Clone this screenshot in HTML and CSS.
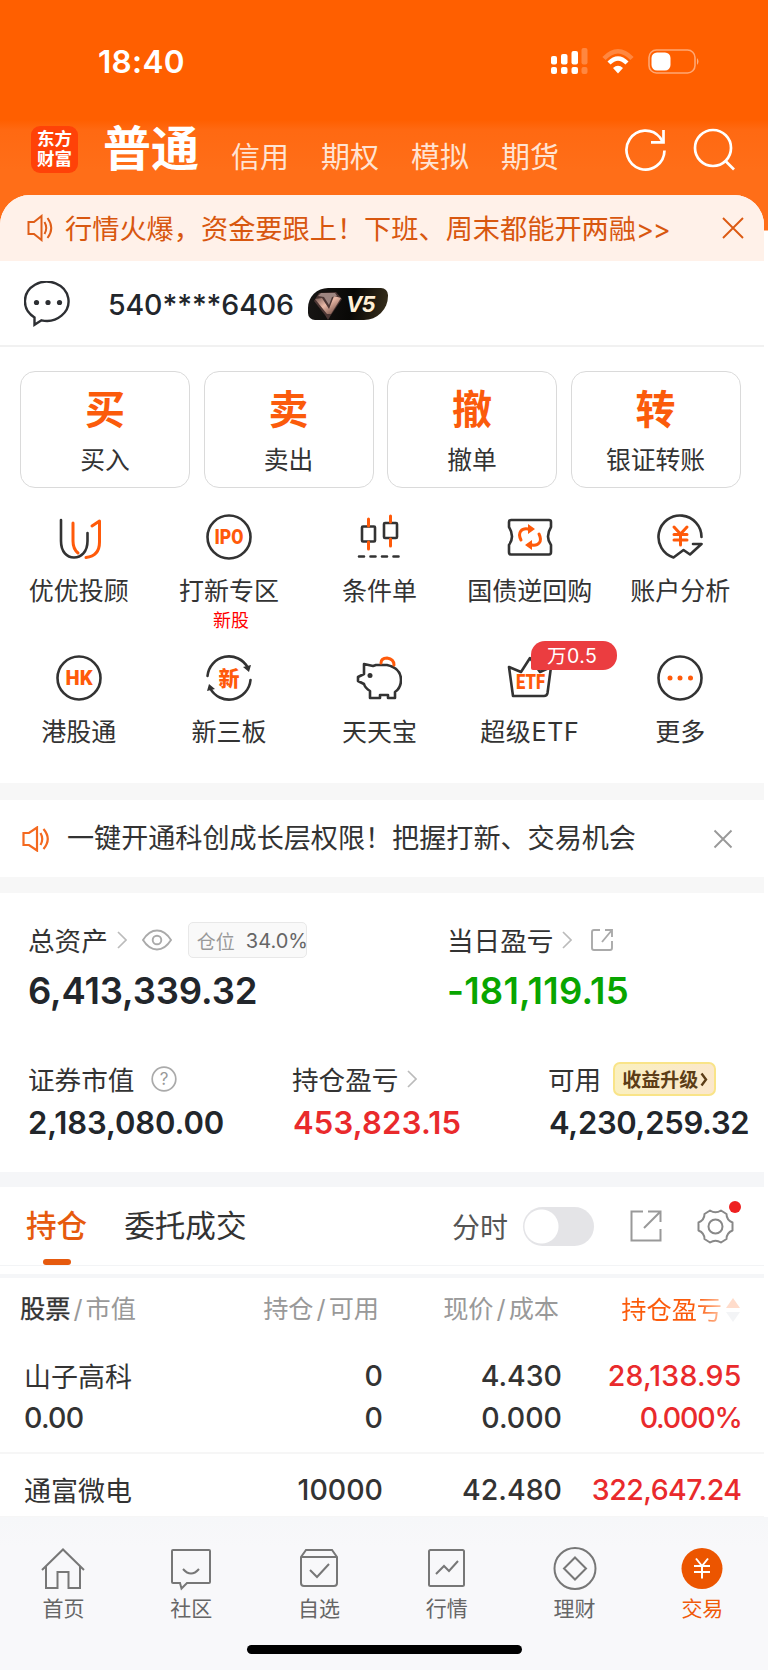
FILE: index.html
```
<!DOCTYPE html>
<html lang="zh-CN">
<head>
<meta charset="utf-8">
<title>交易</title>
<link rel="stylesheet" href="styles.css">
</head>
<body>
<div class="app">
<header class="hero">
  <div class="status">
    <span class="clock">18:40</span>
    <svg class="signal" width="37" height="27" viewBox="0 0 37 27" fill="#fff"><rect x="0" y="8" width="6" height="8.500" rx="2"/><rect x="10" y="6" width="6.500" height="10.500" rx="2"/><rect x="20.500" y="3" width="6.500" height="13.500" rx="2"/><rect x="30.500" y="0" width="6" height="16.500" rx="2" opacity=".25"/><rect x="0" y="19" width="6" height="7" rx="2"/><rect x="10" y="19" width="6.500" height="7" rx="2"/><rect x="20.500" y="19" width="6.500" height="7" rx="2"/><rect x="30.500" y="19" width="6" height="7" rx="2" opacity=".25"/></svg>
    <svg class="wifi" width="32" height="25" viewBox="0 0 32 25" fill="none"><path d="M2 9.500Q16-5 30 9.500" stroke="#fff" stroke-opacity=".25" stroke-width="4.500"/><path d="M7 14Q16 5 25 14" stroke="#fff" stroke-width="4.300"/><path d="M11 19Q16 14.500 21 19L16 24.500Z" fill="#fff"/></svg>
    <svg class="battery" width="52" height="25" viewBox="0 0 52 25"><rect x="1" y="1" width="46" height="23" rx="7.500" fill="none" stroke="#fff" stroke-opacity=".45" stroke-width="1.600"/><rect x="3.500" y="3.500" width="19" height="18" rx="5.500" fill="#fff"/><path d="M49 9Q52 12.500 49 16Z" fill="#fff" opacity=".5"/></svg>
  </div>
  <nav class="modes">
    <div class="logo"><span>东方</span><span>财富</span></div>
    <b class="mode-on">普通</b>
    <span class="mode">信用</span><span class="mode">期权</span><span class="mode">模拟</span><span class="mode">期货</span>
    <svg class="refresh" width="43" height="44" viewBox="0 0 43 44" fill="none" stroke="#fff" stroke-width="2.700"><path d="M40.500 22.500A19 19.500 0 1 1 36 9.500L39 14.300"/><path d="M39.500 2V14.300H27"/></svg>
    <svg class="search" width="43" height="44" viewBox="0 0 43 44" fill="none" stroke="#fff" stroke-width="2.700"><circle cx="20" cy="20" r="18"/><path d="M32.500 33L41 41.500"/></svg>
  </nav>
</header>

<main class="sheet">
  <div class="promo">
    <svg width="27" height="28" viewBox="0 0 27 28" fill="none" stroke="#df5e18" stroke-width="2"><path d="M1.500 8H7L14.500 2V26L7 20H1.500Z"/><path d="M17.500 8Q21 14 17.500 20M20.500 4Q28 14 20.500 24"/></svg>
    <span class="promo-text">行情火爆，资金要跟上！下班、周末都能开两融<span class="more">&gt;&gt;</span></span>
    <svg class="promo-x" width="24" height="24" viewBox="0 0 24 24" stroke="#dc5a12" stroke-width="1.900"><path d="M2 2L22 22M22 2L2 22"/></svg>
  </div>

  <div class="account">
    <svg width="48" height="46" viewBox="0 0 48 46" fill="none" stroke="#2d2f33" stroke-width="2.400"><path d="M10.500 36.500A21.800 19.600 0 1 1 17.500 39.300L10.500 43.800Z"/><g fill="#2d2f33" stroke="none"><circle cx="12.500" cy="21.500" r="2.600"/><circle cx="24" cy="21.500" r="2.600"/><circle cx="35.500" cy="21.500" r="2.600"/></g></svg>
    <span class="acct-no">540****6406</span>
    <div class="vip">
      <svg width="34" height="32" viewBox="0 0 34 32"><defs><linearGradient id="gem" x1="0" y1="0" x2="1" y2="1"><stop offset="0" stop-color="#6b504c"/><stop offset=".45" stop-color="#eab9a7"/><stop offset="1" stop-color="#56342c"/></linearGradient></defs><path d="M11 5L28 4L34 11L23 27L20 32L17 27L6 13Z" fill="#4c3634"/><path d="M7 11L14 10L21 21L26 8L33 10L23 26H19Z" fill="url(#gem)"/><path d="M13 5H27L29 8L24 9L21 17L16 9L10 8Z" fill="#9d8580"/></svg>
      <span>V5</span>
    </div>
  </div>

  <section class="actions">
    <div class="action"><b>买</b><span>买入</span></div>
    <div class="action"><b>卖</b><span>卖出</span></div>
    <div class="action"><b>撤</b><span>撤单</span></div>
    <div class="action"><b>转</b><span>银证转账</span></div>
  </section>

  <section class="tools">
    <div class="tool"><svg class="ico" viewBox="0 0 46 46"><path d="M5 6V27C5 38 11 43.500 18 43.500S31.500 38 31.500 27V19"/><path class="o" d="M17 9V27Q17 35 22 39M30 43.500Q43.500 42 43.500 28V7L36 12"/></svg><span>优优投顾</span></div>
    <div class="tool"><svg class="ico" viewBox="0 0 46 46"><circle cx="23" cy="23" r="21.500"/><text x="23" y="30" textLength="29" lengthAdjust="spacingAndGlyphs" font-size="20">IPO</text></svg><span>打新专区</span><em>新股</em></div>
    <div class="tool"><svg class="ico" viewBox="0 0 46 46"><rect x="6" y="12.500" width="13" height="15" rx="1"/><rect x="28" y="9" width="13" height="15" rx="1"/><path class="o" d="M12.500 5V12M12.500 28V35M34.500 2V8M34.500 25V32"/><path d="M3 42.500H44" stroke-dasharray="5 6.500"/></svg><span>条件单</span></div>
    <div class="tool"><svg class="ico" viewBox="0 0 46 46"><path d="M4 6H42Q44 6 44 8V13Q38 23 44 31V38Q44 40.500 42 40.500H4Q2 40.500 2 38V31Q8 23 2 13V8Q2 6 4 6Z"/><path class="o" d="M14 26C10 18 15 14 21 15M32 20C36 28 31 32 25 31"/><path d="M21 10L28 15L21 20ZM25 26L18 31L25 36Z" fill="#ff5a0a" stroke="none"/></svg><span>国债逆回购</span></div>
    <div class="tool"><svg class="ico" viewBox="0 0 46 46"><path d="M44.500 23A21.500 21.500 0 1 0 16.500 43.500L26.500 36L33 40.500L44.500 30H36"/><path class="o" d="M17 13L23.500 20L30 13M23.500 20V31M17 20.500H30M17 26H30"/></svg><span>账户分析</span></div>

    <div class="tool"><svg class="ico" viewBox="0 0 46 46"><circle cx="23" cy="23" r="21.500"/><text x="23" y="30" textLength="27" lengthAdjust="spacingAndGlyphs" font-size="20">HK</text></svg><span>港股通</span></div>
    <div class="tool"><svg class="ico" viewBox="0 0 46 46"><path d="M1.500 21A21.500 21.500 0 0 1 42 13M44.500 25A21.500 21.500 0 0 1 4 33"/><path d="M37 12L45 10L43 17ZM9 34L1 36L3 29Z" fill="#333" stroke="none"/><text x="23" y="31" font-size="21">新</text></svg><span>新三板</span></div>
    <div class="tool"><svg class="ico" viewBox="0 0 46 46"><path d="M8 9L17 11L20 10H31Q45 13 45 25Q45 33 39 37V43H32V40H24V43H14V36Q9 33 8 29L2 26V22L8 19V15Z"/><circle cx="14" cy="20.500" r="2.500" fill="#333" stroke="none"/><path class="o" d="M25 8Q25 3 31 3Q38 4 38 10"/></svg><span>天天宝</span></div>
    <div class="tool"><svg class="ico" viewBox="0 0 46 46"><path d="M6 41L2 12L14 17L23 3L33 17L44 12L40.500 38Q40 41 37 41Z"/><text x="23.500" y="34" textLength="29" lengthAdjust="spacingAndGlyphs" font-size="21">ETF</text></svg><span class="etf">超级ETF</span><i class="rate">万0.5</i></div>
    <div class="tool"><svg class="ico" viewBox="0 0 46 46"><circle cx="23" cy="23" r="21.500"/><g fill="#ff5a0a" stroke="none"><circle cx="13" cy="23" r="2.500"/><circle cx="23" cy="23" r="2.500"/><circle cx="33.500" cy="23" r="2.500"/></g></svg><span>更多</span></div>
  </section>

  <div class="notice">
    <svg width="28" height="26" viewBox="0 0 28 26" fill="none" stroke="#f4691f" stroke-width="2.200"><path d="M1.500 7H7L15 1.500V24.500L7 19H1.500Z"/><path d="M18.500 7Q22 13 18.500 19M21.500 3Q30 13 21.500 23"/></svg>
    <span>一键开通科创成长层权限！把握打新、交易机会</span>
    <svg class="notice-x" width="20" height="20" viewBox="0 0 20 20" stroke="#999" stroke-width="1.900"><path d="M1.500 1.500L18.500 18.500M18.500 1.500L1.500 18.500"/></svg>
  </div>

  <section class="totals">
    <div class="total">
      <div class="cap"><span>总资产</span><svg class="chev" viewBox="0 0 10 18"><path d="M1 1L9 9L1 17"/></svg>
        <svg class="eye" width="30" height="22" viewBox="0 0 30 22"><path d="M1 11Q7 1.500 15 1.500T29 11Q23 20.500 15 20.500T1 11Z"/><circle cx="15" cy="11" r="4.300"/></svg>
        <div class="ratio"><span>仓位</span><span class="pct">34.0%</span></div></div>
      <div class="sum">6,413,339.32</div>
    </div>
    <div class="total">
      <div class="cap"><span>当日盈亏</span><svg class="chev" viewBox="0 0 10 18"><path d="M1 1L9 9L1 17"/></svg>
        <svg class="share" width="24" height="24" viewBox="0 0 24 24"><path d="M10 2H4Q2 2 2 4V20Q2 22 4 22H20Q22 22 22 20V13M15 2H22V9M22 2L12 14"/></svg></div>
      <div class="sum down">-181,119.15</div>
    </div>
  </section>

  <section class="details">
    <div class="detail"><div class="cap"><span>证券市值</span><svg class="help" width="26" height="26" viewBox="0 0 26 26"><circle cx="13" cy="13" r="11.800" fill="none" stroke="#aaa" stroke-width="1.700"/><text x="13" y="19" text-anchor="middle" font-size="17" fill="#999">?</text></svg></div><div class="val v1">2,183,080.00</div></div>
    <div class="detail"><div class="cap"><span>持仓盈亏</span><svg class="chev" viewBox="0 0 10 18"><path d="M1 1L9 9L1 17"/></svg></div><div class="val up v2">453,823.15</div></div>
    <div class="detail"><div class="cap"><span>可用</span><div class="boost"><span>收益升级</span><svg width="8" height="15" viewBox="0 0 8 15"><path d="M1.500 1.500L6 7.500L1.500 13.500" fill="none" stroke="#5c3d17" stroke-width="2.400"/></svg></div></div><div class="val v3">4,230,259.32</div></div>
  </section>

  <section class="tabs">
    <div class="tab tab-on">持仓</div><div class="tab">委托成交</div>
    <span class="minute">分时</span><span class="switch"></span>
    <svg class="export" width="32" height="32" viewBox="0 0 32 32" fill="none" stroke="#999" stroke-width="2"><path d="M13 1.500H1.500V30.500H30.500V19M18 1.500H30.500V12M30 2L14 18"/></svg>
    <div class="gear"><svg width="37" height="37" viewBox="0 0 37 37" fill="none" stroke="#888" stroke-width="2"><path d="M13 2.500Q18.500 6 24 2.500L29.500 6Q29.500 12 35.500 14.500V22.500Q29.500 25 29.500 31L24 34.500Q18.500 31 13 34.500L7.500 31Q7.500 25 1.500 22.500V14.500Q7.500 12 7.500 6Z" stroke-linejoin="round"/><circle cx="18.500" cy="18.500" r="7"/></svg><i class="dot"></i></div>
  </section>
  <div class="rule"></div>

  <section class="book">
    <div class="row head"><span><strong>股票</strong><s>/</s>市值</span><span>持仓<s>/</s>可用</span><span>现价<s>/</s>成本</span><span class="sort"><span class="fade">持仓盈亏</span><svg width="16" height="32" viewBox="0 0 16 32"><path d="M8 4L15 14H1Z" fill="#ffdccb"/><path d="M8 28L15 18H1Z" fill="#f3f4f6"/></svg></span></div>
    <div class="stock">
      <div class="row"><span class="name">山子高科</span><span>0</span><span>4.430</span><span class="up wide">28,138.95</span></div>
      <div class="row"><span class="amount">0.00</span><span>0</span><span>0.000</span><span class="up pctval">0.000%</span></div>
    </div>
    <div class="stock last">
      <div class="row"><span class="name">通富微电</span><span>10000</span><span>42.480</span><span class="up tight">322,647.24</span></div>
    </div>
  </section>
</main>

<footer class="bar">
  <div class="links">
    <div class="link"><svg viewBox="0 0 44 44"><path d="M1 23L22 2.500L43 23M5 19.500V41H16.500V25H27.500V41H39V19.500"/></svg><span>首页</span></div>
    <div class="link"><svg viewBox="0 0 44 44"><path d="M4 3H40Q41 3 41 4V35Q41 36 40 36H18L12.500 41.500L11 36H4Q3 36 3 35V4Q3 3 4 3ZM14 22Q22 31 30 22"/></svg><span>社区</span></div>
    <div class="link"><svg viewBox="0 0 44 44"><path d="M4 10V36Q4 39 7 39H37Q40 39 40 36V10L35 3H9ZM4 10H40M13 23L20 30L32 17"/></svg><span>自选</span></div>
    <div class="link"><svg viewBox="0 0 44 44"><rect x="4" y="3" width="35" height="36" rx="1.500"/><path d="M11 27L19 19L24 24L33 14"/></svg><span>行情</span></div>
    <div class="link"><svg viewBox="0 0 44 44"><circle cx="22" cy="21.500" r="20.500"/><path d="M22 10.500L33 21.500L22 32.500L11 21.500Z"/></svg><span>理财</span></div>
    <div class="link on"><svg viewBox="0 0 44 44"><circle cx="22" cy="21.500" r="20.500" fill="#ec5500" stroke="none"/><path d="M16 11.500L22 19L28 11.500M22 19V31.500M14 19H30M14 25H30" stroke="#fff"/></svg><span>交易</span></div>
  </div>
  <div class="home"></div>
</footer>
</div>
</body>
</html>
```
FILE: styles.css
```
* { box-sizing: border-box; }
body { margin: 0; background: #fff; color: #333; font-family: Inter, "Noto Sans CJK SC", sans-serif; }
.app { width: 768px; height: 1670px; overflow: hidden; white-space: nowrap; background: linear-gradient(#ff5f00 0, #ff5f00 120px, #ff6912 130px, #ff6e18 170px, #ff6e18 230px, #fff 231px); }
svg { display: block; flex: none; }
.hero { height: 195px; }

.status { display: flex; align-items: center; height: 122px; padding: 0 68px 0 98px; }
.clock { flex: 1; font-size: 31.500px; font-weight: 600; color: #fff; letter-spacing: .3px; line-height: 40px; padding-top: 1px; }
.wifi { margin: 0 14px 0 14px; }

.modes { display: flex; height: 73px; padding: 0 32px 0 31px; align-items: flex-start; color: #fff; }
.logo { width: 47px; height: 47px; margin-top: 4px; padding-top: 4px; border-radius: 9px; background: #ff4208; display: flex; flex-direction: column; align-items: center; font-family: "Liberation Serif", "Noto Sans CJK SC", serif; font-size: 17.500px; font-weight: 700; line-height: 19.500px; }
.mode-on { font-size: 48px; line-height: 54px; margin: 0 32px 0 25px; }
.mode { font-size: 29px; line-height: 40px; margin: 16px 32px 0 0; color: #ffe3d2; }
.refresh { margin: 6px 26px 0 auto; }
.search { margin-top: 6px; }

.sheet { width: 764px; height: 1322px; background: #fff; border-radius: 30px 30px 0 0; overflow: hidden; }
.promo { display: flex; align-items: center; height: 66px; padding: 0 19px 0 27px; background: #fff1e9; color: #d8570f; font-size: 27.200px; }
.promo-text { margin-left: 11px; line-height: 40px; padding-top: 3px; }
.more { letter-spacing: -1.200px; }
.promo-x { margin-left: auto; }

.account { display: flex; align-items: center; height: 86px; padding: 2px 0 0 24px; border-bottom: 2px solid #f1f1f1; color: #22262b; }
.acct-no { margin: 1px 0 0 36px; font-size: 28.500px; font-weight: 500; width: 185px; letter-spacing: -.1px; }
.vip { display: flex; align-items: center; margin-left: 15px; width: 80px; height: 32px; border-radius: 20px 7px 24px 7px; background: linear-gradient(100deg, #181615, #090806 55%, #39301c); overflow: hidden; }
.vip span { margin-left: 4px; color: #fff0d6; font-size: 22px; font-weight: 700; font-style: italic; letter-spacing: -.8px; }

.actions { display: grid; grid-template-columns: repeat(4, 170px); gap: 13.500px; padding: 24px 0 0 20px; }
.action { height: 117px; border: 1.500px solid #dadada; border-radius: 15px; display: flex; flex-direction: column; align-items: center; }
.action b { font-size: 40px; line-height: 50px; margin-top: 13px; color: #fb5b0b; }
.action span { font-size: 24.800px; line-height: 34px; margin-top: 8px; }

.tools { display: grid; grid-template-columns: repeat(5, 150.400px); grid-template-rows: 141px 128px; padding: 26px 0 0 3.500px; height: 295px; }
.tool { display: flex; flex-direction: column; align-items: center; position: relative; font-size: 25px; }
.tool span { line-height: 34px; margin-top: 14px; }
.tool .etf { letter-spacing: .7px; }
.tool em { font-style: normal; font-size: 18px; line-height: 22px; color: #f00; margin: 2px 0 0 4px; }
.ico { width: 46px; height: 46px; fill: none; stroke: #333; stroke-width: 2.600; stroke-linecap: round; stroke-linejoin: round; }
.ico .o { stroke: #ff5a0a; stroke-width: 3; }
.ico text { fill: #ff5a0a; stroke: none; font-family: Roboto, "Noto Sans CJK SC", sans-serif; font-weight: 900; text-anchor: middle; }
.rate { position: absolute; left: 76px; top: -14px; width: 86px; height: 29px; border-radius: 14px 14px 14px 2px; background: #eb3d40; color: #fff; font-style: normal; font-size: 19.500px; line-height: 30px; text-align: center; padding-right: 3px; letter-spacing: .5px; }

.notice { display: flex; align-items: center; height: 110px; padding: 0 31px 0 22px; border: solid #f7f7f7; border-width: 17px 0 16px; font-size: 27.100px; }
.notice span { margin-left: 17px; line-height: 40px; padding-top: 1px; }
.notice-x { margin-left: auto; }

.totals { display: grid; grid-template-columns: 419px 1fr; padding: 26px 0 0 28px; height: 149px; }
.cap { display: flex; align-items: center; height: 42px; font-size: 26.600px; }
.cap > span { margin-top: -1px; }
.chev { width: 10px; height: 18px; margin-left: 9px; fill: none; stroke: #bbb; stroke-width: 1.700; }
.eye { margin-left: 15px; fill: none; stroke: #aaa; stroke-width: 1.900; }
.ratio { display: flex; align-items: center; margin-left: 16px; width: 119px; height: 36px; padding-left: 8px; border: 1.500px solid #e8e8e8; border-radius: 5px; background: #f9f9f9; font-size: 19px; color: #999; }
.pct { margin: 2px 0 0 11px; font-size: 20px; color: #666; }
.share { margin-left: 18px; fill: none; stroke: #aaa; stroke-width: 1.900; }
.sum { font-size: 36.500px; font-weight: 600; line-height: 44px; margin-top: 8px; color: #22262b; letter-spacing: -.15px; }
.sum.down { color: #08a500; letter-spacing: .2px; }

.details { display: grid; grid-template-columns: 264px 256px 1fr; height: 130px; padding: 16px 0 0 28px; }
.help { margin-left: 17px; }
.val { font-size: 31px; font-weight: 600; line-height: 40px; margin-top: 3px; color: #22262b; }
.up, .val.up { color: #e92a2c; }
.v1 { letter-spacing: -.1px; }
.v2 { padding-left: 1px; letter-spacing: .2px; }
.v3 { padding-left: 1px; letter-spacing: -.3px; }
.boost { display: flex; align-items: center; gap: 2px; margin-left: 12px; width: 103px; height: 34px; padding-left: 7px; border: 2px solid #f9e488; border-radius: 7px; background: linear-gradient(100deg, #faf0bf, #fbe7cc); font-size: 19px; font-weight: 700; color: #5c3d17; }
.boost span { margin-top: -1px; }

.tabs { display: flex; align-items: center; height: 94px; padding: 0 30px 0 26px; border-top: 15px solid #f5f6f8; border-bottom: 1px solid #f3f4f6; }
.tab { font-size: 30.600px; line-height: 78px; }
.tab-on { display: flex; flex-direction: column; align-items: center; height: 78px; margin-right: 37px; color: #e65a0e; font-weight: 500; }
.tab-on::after { content: ""; flex: none; width: 28px; height: 6px; margin-top: -6px; border-radius: 3px; background: #e65a0e; }
.minute { margin-left: auto; font-size: 28px; color: #555; }
.switch { width: 71px; height: 39px; margin: 0 36px 0 15px; border-radius: 20px; background: radial-gradient(circle at 18.500px 50%, #fff 16.500px, #e4e4e7 17.500px); }
.gear { position: relative; margin-left: 35px; }
.dot { position: absolute; right: -7px; top: -7px; width: 12px; height: 12px; border-radius: 50%; background: #ee2020; }
.rule { height: 12px; border-bottom: 4px solid #f5f6f8; }

.row { display: grid; grid-template-columns: 200px 159px 179px 179.500px; padding-left: 24px; height: 42px; line-height: 42px; font-size: 28.500px; font-weight: 500; text-align: right; }
.row > :first-child { text-align: left; }
.row.head { grid-template-columns: 200px 159px 180px 182px; padding-left: 20px; height: 64px; line-height: 63px; font-size: 25.200px; font-weight: 400; color: #999; }
.head strong { font-weight: 400; color: #333; -webkit-text-stroke: .3px #333; }
.head s { text-decoration: none; margin: 0 3px; }
.sort { display: flex; align-items: center; justify-content: flex-end; gap: 3px; color: #fb5b0b; }
.fade { background: linear-gradient(90deg, #fb5b0b 76%, #ffc5a6); -webkit-background-clip: text; background-clip: text; color: transparent; }
.name { font-size: 27px; font-weight: 400; padding-top: 2px; }
.amount { letter-spacing: -.7px; }
.wide { letter-spacing: .2px; }
.pctval { letter-spacing: -1.200px; }
.tight { letter-spacing: -.5px; }
.stock { height: 112px; padding-top: 13px; border-bottom: 2px solid #f6f6f6; }
.stock.last { height: 64px; padding-top: 15px; }

.bar { height: 153px; padding-top: 30px; background: linear-gradient(#f6f7f9 0, #f8f8fa 30px); }
.links { display: grid; grid-template-columns: repeat(6, 127.800px); height: 98px; }
.link { display: flex; flex-direction: column; align-items: center; font-size: 21px; color: #666; padding-right: 1px; }
.link svg { width: 44px; height: 44px; fill: none; stroke: #777; stroke-width: 2; }
.link span { line-height: 30px; margin-top: 3px; }
.link.on { color: #f05a0a; }
.home { width: 275px; height: 9px; margin: 0 auto; border-radius: 5px; background: #000; }
```
